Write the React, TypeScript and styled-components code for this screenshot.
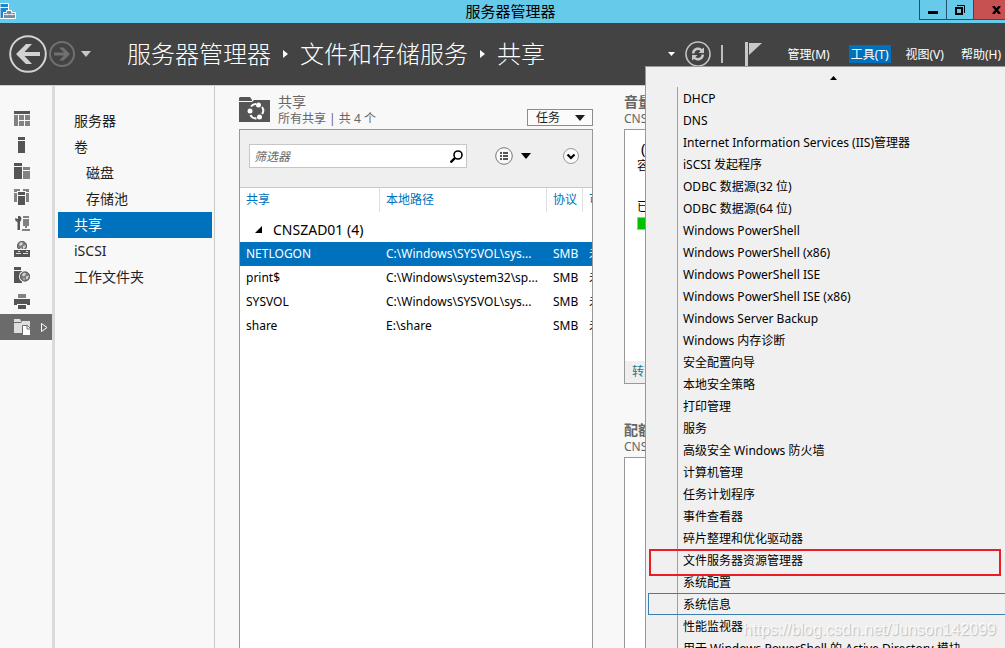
import React from 'react';
import styled, { createGlobalStyle, css } from 'styled-components';

const GlobalStyle = createGlobalStyle`
  * { box-sizing: border-box; }
  html, body, #root { height: 100%; }
  body {
    margin: 0;
    overflow: hidden;
    background: #f8f8f8;
    color: #1e1e1e;
    font-family: "Noto Sans", "Noto Sans CJK SC", sans-serif;
    font-size: 12px;
  }
  button, input { font: inherit; color: inherit; }
  button { padding: 0; border: 0; background: none; }
  a { color: inherit; text-decoration: none; }
  ul { margin: 0; padding: 0; list-style: none; }
  h1, h2, p { margin: 0; font-weight: 400; }
  svg { display: block; flex: none; }
`;

const Window = styled.div`
  position: relative;
  display: flex;
  flex-direction: column;
  height: 100vh;
  overflow: hidden;
`;

/* ---------- title bar ---------- */

const TitleBar = styled.header`
  display: grid;
  grid-template-columns: 102px 1fr 86px;
  height: 23px;
  flex: none;
  background: #66caea;
`;

const AppIcon = styled.span`
  padding-top: 3px;
`;

const WindowTitle = styled.h1`
  color: #000;
  font-size: 15px;
  line-height: 23px;
  text-align: center;
`;

const WindowButtons = styled.div`
  display: flex;
  height: 20px;
  border: 1px solid #24506a;
  border-width: 0 0 1px 1px;
`;

const WindowButton = styled.button<{ $close?: boolean }>`
  display: flex;
  align-items: center;
  justify-content: center;
  flex: ${p => (p.$close ? '1 0 31px' : '0 0 27px')};
  border-right: ${p => (p.$close ? '0' : '1px solid #24506a')};
  background: ${p => (p.$close ? '#c75050' : 'transparent')};
  padding-left: ${p => (p.$close ? '14px' : '0')};
`;

/* ---------- header ---------- */

const Header = styled.div`
  display: flex;
  align-items: center;
  height: 62px;
  flex: none;
  padding: 0 0 0 9px;
  background: #434343;
  color: #fff;
`;

const HistoryButtons = styled.div`
  display: flex;
  align-items: center;
  gap: 1px;
  width: 118px;
  flex: none;
`;

const HistoryMenuButton = styled.button`
  padding: 4px;
`;

const Breadcrumb = styled.nav`
  display: flex;
  align-items: center;
  flex: 1;
  gap: 12px;
  font-size: 24px;
  font-weight: 300;
  line-height: 32px;
  white-space: nowrap;
`;

const Commands = styled.div`
  display: flex;
  align-items: center;
  margin-right: 24px;
`;

const RefreshGroup = styled.div`
  display: flex;
  align-items: center;
  gap: 10px;
`;

const Divider = styled.span`
  width: 2px;
  height: 18px;
  margin: 0 22px 0 10px;
  background: #bdbdbd;
`;

const MenuBar = styled.nav`
  display: flex;
  gap: 13px;
  padding-right: 2px;
`;

const MenuBarButton = styled.button<{ $open?: boolean }>`
  height: 18px;
  padding: 2px 2px 0;
  margin-left: ${p => (p.$open ? '4px' : '0')};
  background: ${p => (p.$open ? '#0071bc' : 'transparent')};
  color: #fff;
  line-height: 16px;
  white-space: nowrap;
`;

/* ---------- side rails ---------- */

const Body = styled.div`
  display: flex;
  flex: 1;
  min-height: 0;
  border-top: 1px solid #cfcfcf;
`;

const IconRail = styled.nav`
  flex: none;
  width: 55px;
  padding-top: 20px;
  border-right: 3px solid #dadada;
`;

const RailButton = styled.button<{ $active?: boolean }>`
  display: flex;
  align-items: center;
  gap: 10px;
  width: 100%;
  height: 26px;
  padding-left: 14px;
  background: ${p => (p.$active ? '#6b6b6b' : 'transparent')};
`;

const SectionNav = styled.nav`
  flex: none;
  width: 160px;
  padding: 22px 2px 0 3px;
  border-right: 1px solid #c8c8c8;
`;

const SectionLink = styled.a<{ $active?: boolean; $nested?: boolean }>`
  display: block;
  height: 26px;
  padding-left: ${p => (p.$nested ? '28px' : '16px')};
  background: ${p => (p.$active ? '#0071bc' : 'transparent')};
  color: ${p => (p.$active ? '#fff' : '#1e1e1e')};
  font-size: 14px;
  line-height: 26px;
`;

/* ---------- tiles ---------- */

const Main = styled.main`
  display: grid;
  grid-template-columns: 1fr 1fr;
  gap: 31px;
  flex: 1;
  min-width: 0;
  min-height: 0;
  padding: 8px 27px 0 24px;
`;

const Column = styled.div`
  display: flex;
  flex-direction: column;
  gap: 38px;
  min-width: 0;
  min-height: 0;
`;

const Tile = styled.section<{ $fill?: boolean }>`
  display: flex;
  flex-direction: column;
  min-height: 0;
  ${p => p.$fill && css`flex: 1;`}
`;

const TileHeader = styled.div`
  display: flex;
  align-items: flex-start;
  gap: 8px;
  height: 35px;
  flex: none;
`;

const TileIcon = styled.span`
  padding-top: 3px;
`;

const TileHeading = styled.div`
  flex: 1;
  color: #666;
  white-space: nowrap;
`;

const TileTitle = styled.h2<{ $strong?: boolean }>`
  font-size: 14px;
  font-weight: ${p => (p.$strong ? 700 : 400)};
  line-height: 16px;
`;

const TileSubtitle = styled.p`
  line-height: 18px;
`;

const TasksButton = styled.button`
  display: flex;
  align-items: center;
  justify-content: space-between;
  width: 66px;
  height: 17px;
  margin-top: 15px;
  padding: 0 7px 0 8px;
  border: 1px solid #8c8c8c;
  background: #fbfbfb;
  line-height: 15px;
`;

const Panel = styled.div<{ $short?: boolean }>`
  display: flex;
  flex-direction: column;
  flex: ${p => (p.$short ? '0 0 255px' : '1')};
  min-height: 0;
  overflow: hidden;
  border: 1px solid #999;
  border-bottom-width: ${p => (p.$short ? '1px' : '0')};
  background: #fff;
`;

const Toolbar = styled.div`
  display: flex;
  align-items: flex-start;
  height: 58px;
  flex: none;
  padding: 14px 13px 0 9px;
  border-bottom: 1px solid #c9c9c9;
  background: #efefef;
`;

const SearchBox = styled.label`
  display: flex;
  align-items: center;
  flex: 0 1 218px;
  height: 24px;
  margin-right: 28px;
  padding: 0 3px 0 4px;
  border: 1px solid #c6c6c6;
  background: #fff;
`;

const SearchInput = styled.input`
  flex: 1;
  min-width: 0;
  height: 20px;
  padding: 0;
  border: 0;
  outline: 0;
  background: none;
  font-style: italic;
  &::placeholder { color: #666; opacity: 1; }
`;

const ToolButton = styled.button<{ $end?: boolean }>`
  display: flex;
  align-items: center;
  gap: 8px;
  height: 24px;
  margin-left: ${p => (p.$end ? 'auto' : '0')};
`;

const ShareTable = styled.table`
  width: 100%;
  border-collapse: separate;
  border-spacing: 0;
  table-layout: fixed;
  color: #000;
  text-align: left;
`;

const HeadCell = styled.th`
  height: 24px;
  padding: 0 0 2px 6px;
  overflow: hidden;
  border-right: 1px solid #e0e0e0;
  color: #0071bc;
  font-weight: 400;
  white-space: nowrap;
  &:last-child { border-right: 0; }
`;

const GroupCell = styled.td`
  height: 30px;
  padding: 4px 0 0 15px;
  font-size: 14px;
`;

const GroupToggle = styled.button`
  display: flex;
  align-items: center;
  gap: 11px;
  height: 24px;
`;

const ShareRow = styled.tr<{ $selected?: boolean }>`
  height: 24px;
  background: ${p => (p.$selected ? '#0071bc' : 'transparent')};
  color: ${p => (p.$selected ? '#fff' : '#000')};
`;

const Cell = styled.td`
  padding: 0 0 2px 6px;
  overflow: hidden;
  white-space: nowrap;
`;

const VolumeBody = styled.div`
  flex: 1;
  padding: 8px 12px;
  color: #000;
`;

const VolumeName = styled.p`
  padding-left: 4px;
  font-size: 15px;
  line-height: 20px;
`;

const VolumeLine = styled.p`
  line-height: 16px;
`;

const UsageLabel = styled.p`
  margin-top: 23px;
  line-height: 20px;
`;

const UsageBar = styled.div`
  height: 13px;
  border: 1px solid #b5b5b5;
  background: #00c000;
`;

const PanelFooter = styled.a`
  height: 22px;
  padding-left: 7px;
  background: #efefef;
  color: #1d7796;
  line-height: 22px;
`;

/* ---------- tools menu ---------- */

const ToolsMenu = styled.div`
  position: absolute;
  top: 66px;
  right: 0;
  z-index: 1;
  width: 360px;
  border: 1px solid #999;
  border-width: 1px 0 0 1px;
  background: #f0f0f0;
  color: #000;
`;

const MenuScrollUp = styled.button`
  display: flex;
  align-items: center;
  justify-content: center;
  width: 100%;
  height: 20px;
  padding: 2px 0 0 16px;
`;

const MenuItems = styled.ul`
  background: linear-gradient(#a0a0a0, #a0a0a0) 31px 0 / 1px 100% no-repeat;
`;

const MenuItem = styled.li`
  position: relative;
  padding-left: 2px;
`;

const MenuButton = styled.button<{ $hot?: boolean }>`
  width: 100%;
  height: 22px;
  padding: 2px 0 0 34px;
  border: 1px solid ${p => (p.$hot ? '#3c7fb1' : 'transparent')};
  border-right: 0;
  line-height: 18px;
  text-align: left;
  white-space: nowrap;
`;

const Callout = styled.span`
  position: absolute;
  inset: 0 4px -5px 3px;
  border: 2px solid #ed1c24;
  pointer-events: none;
`;

const Watermark = styled.span`
  position: absolute;
  right: 9px;
  bottom: 8px;
  z-index: 2;
  color: rgba(255, 255, 255, 0.8);
  font-family: "Liberation Sans", sans-serif;
  font-size: 16px;
  line-height: 20px;
  text-shadow: 1px 1px 1px rgba(0, 0, 0, 0.22);
  pointer-events: none;
`;

/* ---------- drawings ---------- */

const Caret = ({ w = 10, h = 6, fill = '#000' }: { w?: number; h?: number; fill?: string }) => (
  <svg width={w} height={h} viewBox="0 0 10 6" preserveAspectRatio="none"><path d="M0 0h10L5 6z" fill={fill} /></svg>
);

const CrumbArrow = () => (
  <svg width="5" height="8" viewBox="0 0 5 8"><path d="M0 0l5 4-5 4z" fill="#fff" /></svg>
);

const ServerManagerIcon = () => (
  <svg width="16" height="16" viewBox="0 0 16 16">
    <path d="M0 .5h8.500v15H0z" fill="#1c86d1" stroke="#fff" />
    <path d="M0 4.500h8" stroke="#fff" />
    <path d="M3.500 9.500h3V7.500h5v2h4v6h-12z" fill="#6f8fa5" stroke="#fff" />
    <path d="M4 11.500h11M7 12.500v-2m5 2v-2" stroke="#dce8ef" />
  </svg>
);

const BackIcon = () => (
  <svg width="38" height="38" viewBox="0 0 38 38" fill="none">
    <circle cx="19" cy="19" r="17.800" stroke="#d2d2d2" strokeWidth="2" />
    <path d="M7 19L17 9h6l-7.500 8H31v4H15.500l7.500 8h-6z" fill="#d2d2d2" />
  </svg>
);

const ForwardIcon = () => (
  <svg width="28" height="28" viewBox="0 0 28 28" fill="none">
    <circle cx="14" cy="14" r="12" stroke="#707070" strokeWidth="2" />
    <path d="M22 14l-6.500-6.500H11l5 5H6v3h10l-5 5h4.500z" fill="#707070" />
  </svg>
);

const RefreshIcon = () => (
  <svg width="26" height="26" viewBox="0 0 26 26">
    <circle cx="13" cy="13" r="12" fill="none" stroke="#c4c4c4" strokeWidth="1.600" />
    <path d="M7 12.500c0-3.500 2.500-6 6-6 1.800 0 3 .6 4 1.500L19 6.500V12h-5.500l2-2c-.7-.7-1.500-1-2.500-1-2 0-3.300 1.500-3.500 3.500z" fill="#c8c8c8" />
    <path d="M19 13.500c0 3.500-2.500 6-6 6-1.800 0-3-.6-4-1.500L7 19.500V14h5.500l-2 2c.7.7 1.500 1 2.500 1 2 0 3.300-1.500 3.500-3.500z" fill="#c8c8c8" />
  </svg>
);

const FlagIcon = () => (
  <svg width="17" height="24" viewBox="0 0 17 24" fill="#c8c8c8">
    <path d="M0 0h3v24H0zM4 1h13L4 13z" />
  </svg>
);

const Globe = ({ x, y, r }: { x: number; y: number; r: number }) => (
  <g transform={`translate(${x} ${y})`}>
    <circle r={r} fill="#7d7d7d" />
    <circle r={r - 0.5} fill="none" stroke="#5c5c5c" />
    <path d="M-3 -2l2-2 2 1-1 2-2 1zM1 0l3-1-1 3-2 1zM-2 2h2l-1 2z" fill="#d2d2d2" />
  </g>
);

const D = '#555';
const G = '#828282';

const railIcons: { label: string; art: React.ReactNode }[] = [
  { label: '仪表板', art: <><path d="M0 0h16v3H0z" fill={D} /><path d="M0 4h4v11H0zM5 4h5v5H5zM11 4h5v5h-5zM5 10h5v5H5zM11 10h5v5h-5z" fill={G} /></> },
  { label: '本地服务器', art: <path d="M4 0h7v3H4zM4 4h7v12H4z" fill={D} /> },
  { label: '所有服务器', art: <><path d="M0 0h8v3H0zM0 4h8v12H0z" fill={D} /><path d="M9 4h7v3H9zM9 8h7v8H9z" fill={G} /></> },
  { label: 'AD DS', art: <><path d="M0 0h6v2H3v1H0zM9 0h6v3h-3V2H9zM0 4h3v9H0zM12 4h3v9h-3z" fill={G} /><path d="M4 3h7v3H4zM4 7h7v9H4z" fill={D} /></> },
  { label: 'DHCP', art: <><path d="M1 3l3 1V1h2l1.500 2L7 5.500 6 7v8H3.500V7L1.500 6z" fill={D} /><path d="M9 1h6v2H9zM9 4h6v7H9zM11 11h2v2h-2zM8 14h8v2H8z" fill={G} /></> },
  { label: 'DNS', art: <><Globe x={8} y={5} r={5} /><path d="M0 8h16v1H0z" fill="#f8f8f8" /><path d="M0 9h16v7H0z" fill={D} /><path d="M2 12h5v1H2zM9 12h5v1H9zM4 10h2v1H4zM12 10h2v1h-2z" fill="#ddd" /></> },
  { label: 'IIS', art: <><path d="M0 0h7v3H0zM0 4h8v12H0z" fill={D} /><circle cx="11" cy="9.500" r="6" fill="#f8f8f8" /><Globe x={11} y={9.5} r={5} /></> },
  { label: '打印服务', art: <><path d="M4 1h8v4H4z" fill={G} /><path d="M0 6h16v6h-3v-1H3v1H0zM4 12h8v4H4z" fill={D} /></> },
  { label: '文件和存储服务', art: <><path d="M0 0h6l1 2v1H0zM0 4h7l1-2h8v12H0z" fill="#dedede" /><path d="M8.500 6.500h5l3 3v7h-8z" fill="#fff" stroke="#6b6b6b" /><path d="M13 6.500v3.500h3.500" fill="none" stroke="#6b6b6b" /></> },
];

const SharesIcon = () => (
  <svg width="31" height="26" viewBox="0 0 31 26">
    <path d="M0 1l1-1h10l2 3v1H0zM0 5h13l2-2h16v22H0z" fill="#555" />
    <g fill="none" stroke="#fff" strokeWidth="2">
      <path d="M12 9.500c1.500-2 3-2.500 5-2.500M23 10c1.500 2 1.500 5 0 7M17.500 21.500c-2.500 0-5-1-6-3.500" />
    </g>
    <g fill="#fff"><circle cx="19.500" cy="8" r="2.500" /><circle cx="11" cy="14" r="2.500" /><circle cx="20.500" cy="20" r="2.500" /></g>
  </svg>
);

const shares = [
  ['NETLOGON', 'C:\\Windows\\SYSVOL\\sys...', 'SMB', '未'],
  ['print$', 'C:\\Windows\\system32\\sp...', 'SMB', '未'],
  ['SYSVOL', 'C:\\Windows\\SYSVOL\\sys...', 'SMB', '未'],
  ['share', 'E:\\share', 'SMB', '未'],
];

const sections = [
  { text: '服务器' },
  { text: '卷' },
  { text: '磁盘', nested: true },
  { text: '存储池', nested: true },
  { text: '共享', active: true },
  { text: 'iSCSI' },
  { text: '工作文件夹' },
];

const tools = [
  'DHCP', 'DNS', 'Internet Information Services (IIS)管理器', 'iSCSI 发起程序',
  'ODBC 数据源(32 位)', 'ODBC 数据源(64 位)', 'Windows PowerShell', 'Windows PowerShell (x86)',
  'Windows PowerShell ISE', 'Windows PowerShell ISE (x86)', 'Windows Server Backup',
  'Windows 内存诊断', '安全配置向导', '本地安全策略', '打印管理', '服务',
  '高级安全 Windows 防火墙', '计算机管理', '任务计划程序', '事件查看器', '碎片整理和优化驱动器',
  '文件服务器资源管理器', '系统配置', '系统信息', '性能监视器',
  '用于 Windows PowerShell 的 Active Directory 模块',
];

export default function App() {
  return (
    <Window>
      <GlobalStyle />
      <TitleBar>
        <AppIcon><ServerManagerIcon /></AppIcon>
        <WindowTitle>服务器管理器</WindowTitle>
        <WindowButtons>
          <WindowButton aria-label="最小化">
            <svg width="10" height="10" viewBox="0 0 10 10"><path d="M0 6h10v3H0z" /></svg>
          </WindowButton>
          <WindowButton aria-label="还原">
            <svg width="10" height="10" viewBox="0 0 10 10" fill="none" stroke="#000"><path d="M1 3h6v6H1z" strokeWidth="2" /><path d="M2 .5h7.500V8" /></svg>
          </WindowButton>
          <WindowButton $close aria-label="关闭">
            <svg width="9" height="8" viewBox="0 0 9 8"><path d="M1 0l7 8M8 0L1 8" stroke="#000" strokeWidth="2.400" /></svg>
          </WindowButton>
        </WindowButtons>
      </TitleBar>

      <Header>
        <HistoryButtons>
          <button aria-label="后退"><BackIcon /></button>
          <button aria-label="前进"><ForwardIcon /></button>
          <HistoryMenuButton aria-label="历史记录"><Caret fill="#c8c8c8" /></HistoryMenuButton>
        </HistoryButtons>
        <Breadcrumb>
          <a href="#dashboard">服务器管理器</a>
          <CrumbArrow />
          <a href="#storage">文件和存储服务</a>
          <CrumbArrow />
          <a href="#shares">共享</a>
        </Breadcrumb>
        <Commands>
          <RefreshGroup>
            <button aria-label="更多"><Caret w={7} h={4} fill="#fff" /></button>
            <button aria-label="刷新"><RefreshIcon /></button>
          </RefreshGroup>
          <Divider />
          <button aria-label="通知"><FlagIcon /></button>
        </Commands>
        <MenuBar>
          <MenuBarButton>管理(M)</MenuBarButton>
          <MenuBarButton $open aria-expanded="true">工具(T)</MenuBarButton>
          <MenuBarButton>视图(V)</MenuBarButton>
          <MenuBarButton>帮助(H)</MenuBarButton>
        </MenuBar>
      </Header>

      <Body>
        <IconRail>
          {railIcons.map((icon, i) => {
            const active = i === railIcons.length - 1;
            return (
              <RailButton key={icon.label} $active={active} aria-label={icon.label}>
                <svg width="17" height="16" viewBox="0 0 17 16">{icon.art}</svg>
                {active && (
                  <svg width="7" height="9" viewBox="0 0 7 9"><path d="M.5 .5v8l5.500-4z" fill="none" stroke="#fff" /></svg>
                )}
              </RailButton>
            );
          })}
        </IconRail>

        <SectionNav>
          {sections.map(s => (
            <SectionLink key={s.text} href="#" $active={s.active} $nested={s.nested}>{s.text}</SectionLink>
          ))}
        </SectionNav>

        <Main>
          <Column>
            <Tile $fill>
              <TileHeader>
                <TileIcon><SharesIcon /></TileIcon>
                <TileHeading>
                  <TileTitle>共享</TileTitle>
                  <TileSubtitle>所有共享 | 共 4 个</TileSubtitle>
                </TileHeading>
                <TasksButton>任务<Caret w={10} h={6} fill="#1e1e1e" /></TasksButton>
              </TileHeader>
              <Panel>
                <Toolbar>
                  <SearchBox>
                    <SearchInput placeholder="筛选器" aria-label="筛选器" />
                    <svg width="13" height="13" viewBox="0 0 13 13" fill="none" stroke="#000"><circle cx="8" cy="5" r="4" strokeWidth="1.600" /><path d="M5 8l-4.500 4.500" strokeWidth="2.400" /></svg>
                  </SearchBox>
                  <ToolButton aria-label="视图选项">
                    <svg width="18" height="18" viewBox="0 0 18 18">
                      <circle cx="9" cy="9" r="8.300" fill="#fafafa" stroke="#777" />
                      <path d="M5 5h2v2H5zM8 5h5v2H8zM5 8h2v2H5zM8 8h5v2H8zM5 11h2v2H5zM8 11h5v2H8z" fill="#555" />
                    </svg>
                    <Caret />
                  </ToolButton>
                  <ToolButton $end aria-label="展开">
                    <svg width="16" height="16" viewBox="0 0 16 16" fill="none">
                      <circle cx="8" cy="8" r="7.500" fill="#fafafa" stroke="#999" />
                      <path d="M4.500 6.500L8 10l3.500-3.500" stroke="#000" strokeWidth="2.200" />
                    </svg>
                  </ToolButton>
                </Toolbar>
                <ShareTable>
                  <colgroup>
                    <col style={{ width: 140 }} />
                    <col style={{ width: 167 }} />
                    <col style={{ width: 36 }} />
                    <col />
                  </colgroup>
                  <thead>
                    <tr>
                      <HeadCell>共享</HeadCell>
                      <HeadCell>本地路径</HeadCell>
                      <HeadCell>协议</HeadCell>
                      <HeadCell>可</HeadCell>
                    </tr>
                  </thead>
                  <tbody>
                    <tr>
                      <GroupCell colSpan={4}>
                        <GroupToggle aria-expanded="true">
                          <svg width="7" height="7" viewBox="0 0 7 7"><path d="M7 0v7H0z" /></svg>
                          CNSZAD01 (4)
                        </GroupToggle>
                      </GroupCell>
                    </tr>
                    {shares.map((row, i) => (
                      <ShareRow key={row[0]} $selected={i === 0}>
                        {row.map((value, c) => <Cell key={c}>{value}</Cell>)}
                      </ShareRow>
                    ))}
                  </tbody>
                </ShareTable>
              </Panel>
            </Tile>
          </Column>

          <Column>
            <Tile>
              <TileHeader>
                <TileHeading>
                  <TileTitle $strong>音量</TileTitle>
                  <TileSubtitle>CNSZAD01</TileSubtitle>
                </TileHeading>
              </TileHeader>
              <Panel $short>
                <VolumeBody>
                  <VolumeName>(C:)</VolumeName>
                  <VolumeLine>容量</VolumeLine>
                  <UsageLabel>已用</UsageLabel>
                  <UsageBar />
                </VolumeBody>
                <PanelFooter href="#volumes">转到卷</PanelFooter>
              </Panel>
            </Tile>
            <Tile $fill>
              <TileHeader>
                <TileHeading>
                  <TileTitle $strong>配额</TileTitle>
                  <TileSubtitle>CNSZAD01</TileSubtitle>
                </TileHeading>
              </TileHeader>
              <Panel />
            </Tile>
          </Column>
        </Main>
      </Body>

      <ToolsMenu>
        <MenuScrollUp aria-label="向上滚动">
          <svg width="7" height="4" viewBox="0 0 7 4"><path d="M0 4h7L3.500 0z" /></svg>
        </MenuScrollUp>
        <MenuItems>
          {tools.map(name => (
            <MenuItem key={name}>
              <MenuButton $hot={name === '系统信息'}>{name}</MenuButton>
              {name === '文件服务器资源管理器' && <Callout />}
            </MenuItem>
          ))}
        </MenuItems>
      </ToolsMenu>
      <Watermark>https://blog.csdn.net/Junson142099</Watermark>
    </Window>
  );
}
